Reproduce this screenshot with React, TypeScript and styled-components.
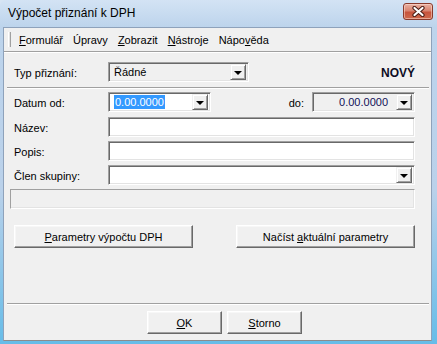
import React from 'react';
import styled, { createGlobalStyle } from 'styled-components';

const Global = createGlobalStyle`
  html, body { margin: 0; padding: 0; background: #d6e4f3; }
  body { font-family: "Liberation Sans", Arial, sans-serif; font-size: 11px; color: #000; }
  * { box-sizing: border-box; }
`;

const Window = styled.div`
  width: 437px;
  height: 344px;
  display: flex;
  flex-direction: column;
  background: linear-gradient(to bottom, #d3e3f4 0px, #bdd4ec 27px, #bad1ea 55%, #66bce8 100%);
  border-radius: 6px 6px 0 0;
  padding: 0 5px 3px 3px;
`;

const TitleBar = styled.div`
  height: 27px;
  display: flex;
  align-items: center;
  padding-left: 5px;
  font-size: 12px;
`;

const TitleText = styled.div`
  flex: 1;
  padding-bottom: 1px;
`;

const CloseButton = styled.div`
  width: 30px;
  height: 17px;
  margin-bottom: 4px;
  margin-right: -1px;
  border: 1px solid #8a3a2c;
  border-radius: 3px;
  background: linear-gradient(to bottom, #eab1a2 0%, #d98470 45%, #c7543d 55%, #cf6a4e 100%);
  box-shadow: inset 0 0 0 1px rgba(255, 230, 220, 0.5);
  display: flex;
  align-items: center;
  justify-content: center;
`;

const Client = styled.div`
  flex: 1;
  display: flex;
  flex-direction: column;
  background: #f0f0f0;
  border: 1px solid #8ea2bb;
  border-bottom-color: #8c8c8c;
`;

const MenuBar = styled.div`
  height: 24px;
  display: flex;
  align-items: center;
  gap: 10px;
  padding-left: 4px;
  background: #f0f0f0;
  border-bottom: 1px solid #a0a0a0;
  box-shadow: 0 1px 0 #ffffff;
`;

const Gripper = styled.div`
  width: 3px;
  height: 15px;
  margin-right: -2px;
  border-left: 1px solid #ffffff;
  border-right: 1px solid #a0a0a0;
  background: #e3e3e3;
`;

const MenuItem = styled.span`
  font-size: 11px;
  padding-top: 1px;
`;

const U = styled.span`
  text-decoration: underline;
  text-underline-offset: 1px;
`;

const Content = styled.div`
  flex: 1;
  display: flex;
  flex-direction: column;
  padding: 9px 16px 6px 10px;
  margin-top: 1px;
`;

const Row = styled.div<{ $top: number }>`
  display: flex;
  align-items: center;
  height: 20px;
  margin-top: ${(p) => p.$top}px;
`;

const Label = styled.div`
  width: 94px;
  flex-shrink: 0;
  padding-top: 1px;
`;

const Sunken = styled.div<{ $width?: number; $bg?: string; $color?: string; $align?: string }>`
  position: relative;
  height: 20px;
  ${(p) => (p.$width ? `width: ${p.$width}px;` : 'flex: 1;')}
  flex-shrink: 0;
  display: flex;
  align-items: center;
  background: ${(p) => p.$bg || '#ffffff'};
  color: ${(p) => p.$color || '#000'};
  justify-content: ${(p) => p.$align || 'flex-start'};
  border-top: 1px solid #a0a0a0;
  border-left: 1px solid #a0a0a0;
  border-bottom: 1px solid #ffffff;
  border-right: 1px solid #ffffff;
  box-shadow: inset 1px 1px 0 #696969, inset -1px -1px 0 #e3e3e3;
  padding: 2px 2px 2px 2px;
`;

const FieldText = styled.span<{ $pl?: number; $pr?: number }>`
  padding-left: ${(p) => p.$pl ?? 3}px;
  padding-right: ${(p) => p.$pr ?? 0}px;
  flex: 1;
  white-space: nowrap;
`;

const RightText = styled.span`
  flex: 1;
  text-align: right;
  padding-right: 8px;
  color: #101058;
`;

const Selected = styled.span`
  background: #3399ff;
  color: #ffffff;
  padding: 1px 1px 1px 1px;
  margin-left: 3px;
  line-height: 12px;
`;

const ArrowButton = styled.div`
  width: 16px;
  height: 16px;
  flex-shrink: 0;
  display: flex;
  align-items: center;
  justify-content: center;
  background: #f0f0f0;
  border-top: 1px solid #f0f0f0;
  border-left: 1px solid #f0f0f0;
  border-bottom: 1px solid #696969;
  border-right: 1px solid #696969;
  box-shadow: inset 1px 1px 0 #ffffff, inset -1px -1px 0 #a0a0a0;
`;

const Triangle = styled.div`
  width: 0;
  height: 0;
  border-left: 4px solid transparent;
  border-right: 4px solid transparent;
  border-top: 4px solid #000;
  margin-top: 1px;
`;

const Status = styled.div`
  font-weight: bold;
  font-size: 12px;
  margin-left: auto;
  padding-top: 2px;
  color: #0c0c24;
`;

const Separator = styled.div<{ $top: number }>`
  height: 2px;
  margin: ${(p) => p.$top}px -14px 0 -7px;
  border-top: 1px solid #a0a0a0;
  border-bottom: 1px solid #ffffff;
`;

const DoLabel = styled.div`
  margin-left: auto;
  margin-right: 8px;
  padding-top: 1px;
`;

const Blank = styled.div`
  height: 20px;
  margin: 4px 0 0 -4px;
  background: #f0f0f0;
  border-top: 1px solid #a0a0a0;
  border-left: 1px solid #a0a0a0;
  border-bottom: 1px solid #ffffff;
  border-right: 1px solid #ffffff;
  box-shadow: inset -1px -1px 0 #e3e3e3;
`;

const ButtonRow = styled.div`
  display: flex;
  justify-content: space-between;
  margin-top: 16px;
`;

const Button = styled.button<{ $width: number }>`
  width: ${(p) => p.$width}px;
  height: 23px;
  padding: 0;
  font-family: "Liberation Sans", Arial, sans-serif;
  font-size: 11px;
  color: #000;
  background: #f0f0f0;
  border-top: 1px solid #ffffff;
  border-left: 1px solid #ffffff;
  border-bottom: 1px solid #696969;
  border-right: 1px solid #696969;
  box-shadow: inset -1px -1px 0 #a0a0a0, inset 1px 1px 0 #f7f7f7;
  border-radius: 0;
  cursor: default;
`;

const Spacer = styled.div`
  flex: 1;
`;

const Footer = styled.div`
  display: flex;
  gap: 5px;
  margin-top: 6px;
  padding-left: 133px;
`;

const Arrow = () => (
  <ArrowButton>
    <Triangle />
  </ArrowButton>
);

export default function App() {
  return (
    <>
      <Global />
      <Window>
        <TitleBar>
          <TitleText>Výpočet přiznání k DPH</TitleText>
          <CloseButton>
            <svg width="13" height="11" viewBox="0 0 13 11">
              <path d="M2.5 2 L10.5 9 M10.5 2 L2.5 9" stroke="#4a1c14" strokeWidth="4.2" strokeLinecap="round" />
              <path d="M2.5 2 L10.5 9 M10.5 2 L2.5 9" stroke="#ffffff" strokeWidth="2.2" strokeLinecap="round" />
            </svg>
          </CloseButton>
        </TitleBar>
        <Client>
          <MenuBar>
            <Gripper />
            <MenuItem><U>F</U>ormulář</MenuItem>
            <MenuItem>Úpravy</MenuItem>
            <MenuItem><U>Z</U>obrazit</MenuItem>
            <MenuItem><U>N</U>ástroje</MenuItem>
            <MenuItem>Nápo<U>v</U>ěda</MenuItem>
          </MenuBar>
          <Content>
            <Row $top={0}>
              <Label>Typ přiznání:</Label>
              <Sunken $width={141} $bg="#f0f0f0">
                <FieldText $pl={3}>Řádné</FieldText>
                <Arrow />
              </Sunken>
              <Status>NOVÝ</Status>
            </Row>
            <Separator $top={5} />
            <Row $top={3}>
              <Label>Datum od:</Label>
              <Sunken $width={103}>
                <FieldText $pl={0}>
                  <Selected>0.00.0000</Selected>
                </FieldText>
                <Arrow />
              </Sunken>
              <DoLabel>do:</DoLabel>
              <Sunken $width={103} $bg="#f0f0f0">
                <RightText>0.00.0000</RightText>
                <Arrow />
              </Sunken>
            </Row>
            <Row $top={5}>
              <Label>Název:</Label>
              <Sunken />
            </Row>
            <Row $top={4}>
              <Label>Popis:</Label>
              <Sunken />
            </Row>
            <Row $top={4}>
              <Label>Člen skupiny:</Label>
              <Sunken>
                <FieldText />
                <Arrow />
              </Sunken>
            </Row>
            <Blank />
            <ButtonRow>
              <Button $width={179}><U>P</U>arametry výpočtu DPH</Button>
              <Button $width={179}>Načíst <U>a</U>ktuální parametry</Button>
            </ButtonRow>
            <Spacer />
            <Separator $top={0} />
            <Footer>
              <Button $width={75}><U>O</U>K</Button>
              <Button $width={75}><U>S</U>torno</Button>
            </Footer>
          </Content>
        </Client>
      </Window>
    </>
  );
}
